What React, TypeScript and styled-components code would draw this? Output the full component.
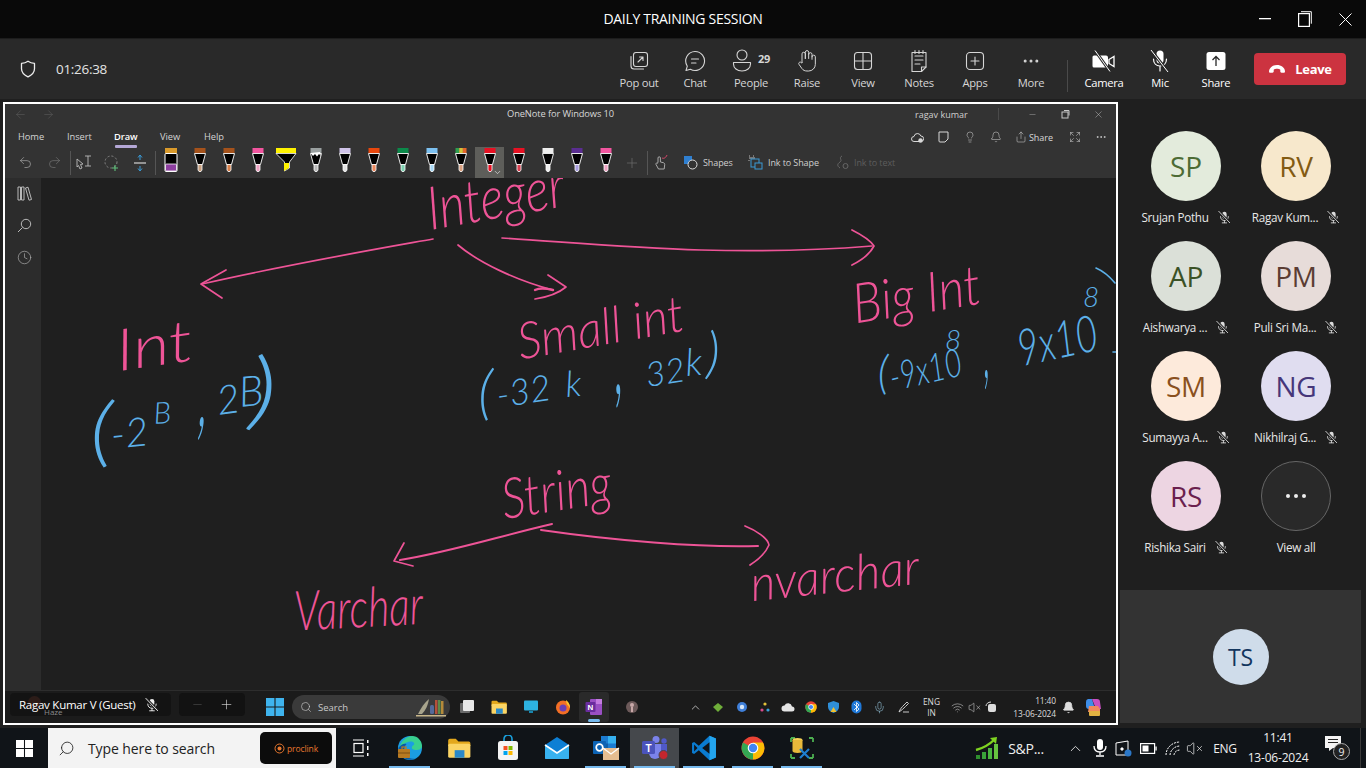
import React from "react";
import styled, { createGlobalStyle } from "styled-components";
import {
  ArrowLeft, ArrowRight, Bell, ChevronDown, ChevronUp, Clock, Expand, Lightbulb, Minus, MoreHorizontal,
  Plus, Redo2, Search, Undo2, X, Mic, Wifi, VolumeX, Share,
} from "lucide-react";

const UI = `"Open Sans", "Noto Sans", "Liberation Sans", sans-serif`;

const Global = createGlobalStyle`
  html, body { margin: 0; padding: 0; background: #1f1f1f; overflow: hidden; }
  * { box-sizing: border-box; }
  #root { width: 1366px; height: 768px; }
`;

const Root = styled.div`
  width: 1366px; height: 768px; display: flex; flex-direction: column;
  background: #1f1f1f; font-family: ${UI}; color: #fff; overflow: hidden;
`;

/* ---------- Teams title bar ---------- */
const TitleBar = styled.header`
  height: 39px; flex: none; position: relative; display: flex; align-items: center; justify-content: center;
  background: #090909; border-bottom: 1px solid #1d1d1d; padding-bottom: 2px;
`;
const Title = styled.div`font-size: 14px; letter-spacing: -0.3px; color: #fff;`;
const WindowButtons = styled.div`
  position: absolute; right: 1px; top: 3px; display: flex; align-items: center;
`;
const WindowButton = styled.div`
  width: 40px; height: 32px; display: flex; align-items: center; justify-content: center;
`;

/* ---------- Teams meeting toolbar ---------- */
const Toolbar = styled.div`
  height: 60px; flex: none; display: flex; align-items: center; background: #292929; padding: 0 20px 0 20px;
`;
const Timer = styled.div`
  margin-left: 20px; font-size: 13.5px; letter-spacing: -0.3px; color: #e4e4e4;
`;
const ToolGroup = styled.div`display: flex; margin-left: auto;`;
const ToolItem = styled.div<{ $bright?: boolean }>`
  width: 56px; height: 60px; display: flex; flex-direction: column; align-items: center; justify-content: flex-start;
  padding-top: 9px; position: relative;
  color: ${(p) => (p.$bright ? "#fff" : "#d6d6d6")};
`;
const ToolIcon = styled.div`height: 25px; display: flex; align-items: center; justify-content: center;`;
const ToolLabel = styled.div<{ $bright?: boolean }>`
  margin-top: 3px; font-size: 11.2px; letter-spacing: -0.25px; line-height: 14px; font-weight: ${(p) => (p.$bright ? 500 : 400)};
`;
const Count = styled.span`
  position: absolute; left: 35px; top: 12px; font-size: 11px; font-weight: 700; letter-spacing: -0.2px;
`;
const ToolDivider = styled.div`width: 1px; height: 32px; background: #4a4a4a; margin: 14px 8px 0 8px;`;
const LeaveButton = styled.div`
  width: 92px; height: 32px; margin-left: 10px; border-radius: 4px; align-self: center;
  background: #cc3340; display: flex; align-items: center; justify-content: center; gap: 9px;
  font-size: 13px; font-weight: 700; letter-spacing: -0.3px;
`;

/* ---------- Stage ---------- */
const Stage = styled.main`
  flex: 1; min-height: 0; display: flex; padding: 3px 0 3px 3px; background: #1f1f1f;
`;
const SharedScreen = styled.section`
  width: 1115px; height: 623px; flex: none; border: 2px solid #fff; display: flex; flex-direction: column;
  background: #1f1f1f; overflow: hidden;
`;

/* ---------- OneNote chrome ---------- */
const Chrome = styled.div`height: 74px; flex: none; background: #333333; display: flex; flex-direction: column;`;
const ChromeTitleRow = styled.div`
  height: 21px; display: flex; align-items: center; position: relative; padding-left: 9px; gap: 15px; color: #5f5f5f;
`;
const AppName = styled.div`
  position: absolute; left: 502px; top: 3px; font-size: 9.3px; letter-spacing: -0.1px; color: #d8d8d8; line-height: 14px;
`;
const UserName = styled.div`
  position: absolute; left: 910px; top: 4px; font-size: 9px; color: #d0d0d0; line-height: 14px;
`;
const UserRule = styled.div`position: absolute; left: 993px; top: 4px; width: 1px; height: 12px; background: #4a4a4a;`;
const MiniWindowButtons = styled.div`
  position: absolute; left: 1011px; top: 3px; display: flex; color: #c8c8c8; align-items: center;
`;
const MiniButton = styled.div`width: 33px; height: 14px; display: flex; align-items: center; justify-content: center;`;
const ChromeTabRow = styled.div`height: 22px; display: flex; align-items: center; padding: 1px 0 0 13px; position: relative;`;
const Tab = styled.div<{ $active?: boolean; $w: number }>`
  width: ${(p) => p.$w}px; font-size: 9.3px; letter-spacing: -0.05px; color: ${(p) => (p.$active ? "#fff" : "#d4d4d4")};
  font-weight: ${(p) => (p.$active ? 600 : 400)}; position: relative; line-height: 14px;
  ${(p) => p.$active && `&::after { content: ""; position: absolute; left: 1px; top: 15px; width: 22px; height: 3px; background: #b4a7d6; border-radius: 1px; }`}
`;
const RibbonActions = styled.div`
  position: absolute; left: 899.5px; top: 3px; display: flex; align-items: center; color: #d8d8d8; height: 18px;
`;
const RibbonAction = styled.div<{ $w: number }>`
  width: ${(p) => p.$w}px; display: flex; align-items: center; gap: 2px; justify-content: center;
  font-size: 9px; color: #d8d8d8;
`;
const ChromeToolRow = styled.div`flex: 1; display: flex; align-items: center; padding-left: 10px;`;
const RibbonIcon = styled.div<{ $w: number; $ml?: number }>`
  width: ${(p) => p.$w}px; margin-left: ${(p) => p.$ml ?? 0}px; height: 31px; display: flex; align-items: center; justify-content: center; flex: none;
`;
const RibbonRule = styled.div<{ $ml?: number }>`width: 1px; height: 24px; background: #555; flex: none; margin-left: ${(p) => p.$ml ?? 0}px;`;
const PenSlot = styled.div<{ $selected?: boolean }>`
  width: 29px; height: 31px; flex: none; display: flex; align-items: flex-start; justify-content: center; padding-top: 1px;
  position: relative; background: ${(p) => (p.$selected ? "#5e5e5a" : "transparent")};
`;
const PenChevron = styled.div`position: absolute; right: 2px; bottom: 1px; display: flex; color: #fff;`;
const RibbonText = styled.div<{ $dim?: boolean; $w: number; $ml?: number }>`
  width: ${(p) => p.$w}px; margin-left: ${(p) => p.$ml ?? 0}px; flex: none; font-size: 9px; letter-spacing: -0.1px; color: ${(p) => (p.$dim ? "#5d5d5d" : "#cfcfcf")};
`;

/* ---------- OneNote body ---------- */
const NoteBody = styled.div`flex: 1; min-height: 0; display: flex;`;
const NoteSide = styled.nav`
  width: 36px; flex: none; background: #2c2c2c; display: flex; flex-direction: column; align-items: center;
  padding-top: 8px; padding-left: 2px; gap: 17px; color: #b9b9b9;
`;
const NoteCanvas = styled.div`flex: 1; position: relative; overflow: hidden; background: #1f1f1f;`;
const InkLayer = styled.svg`position: absolute; left: 0; top: 0;`;
const Ink = styled.span<{ $x: number; $b: number; $s: number; $r?: number; $blue?: boolean; $sx?: number; $sy?: number }>`
  position: absolute; white-space: pre; line-height: 1;
  font-family: "Lato", "Open Sans", sans-serif; font-style: italic; font-weight: 300;
  left: ${(p) => p.$x - 41}px; top: ${(p) => p.$b - 178 - p.$s * 0.8}px; font-size: ${(p) => p.$s}px;
  color: ${(p) => (p.$blue ? "#5cb0e8" : "#ee5497")};
  transform-origin: 0 80%;
  transform: rotate(${(p) => p.$r ?? 0}deg) scale(${(p) => p.$sx ?? 1}, ${(p) => p.$sy ?? 1});
`;

/* ---------- Remote taskbar ---------- */
const RemoteBar = styled.div`
  height: 33px; flex: none; background: #1b1b1b; border-top: 1px solid #2d2d2d; display: flex; align-items: center; position: relative;
`;
const WeatherBlob = styled.div`
  position: absolute; left: 23px; top: 5px; width: 13px; height: 13px; border-radius: 50%; background: #8a4030; z-index: 1;
`;
const NamePill = styled.div`
  position: absolute; left: 5px; top: 2px; width: 161px; height: 23px; background: #121212c8; border-radius: 4px;
  display: flex; align-items: center; padding-left: 9px; gap: 8px; z-index: 2;
  font-size: 11.5px; letter-spacing: -0.25px; color: #fff; font-weight: 500;
`;
const HazeText = styled.div`
  position: absolute; left: 39px; top: 16px; font-size: 8px; color: #8c8c8c; z-index: 3; line-height: 10px;
`;
const ZoomPill = styled.div`
  position: absolute; left: 174px; top: 2px; width: 66px; height: 23px; background: #121212; border-radius: 4px;
  display: flex; align-items: center; justify-content: space-around; padding: 0 4px; color: #e0e0e0;
`;
const RemoteApps = styled.div`margin-left: 255px; display: flex; align-items: center; height: 100%;`;
const RemoteSlot = styled.div<{ $w: number; $active?: boolean }>`
  width: ${(p) => p.$w}px; height: 30px; flex: none; display: flex; align-items: center; justify-content: center; position: relative;
  ${(p) => p.$active && `background: #2a2a2a; border-radius: 3px; &::after { content: ""; position: absolute; bottom: 0; left: 9px; width: 12px; height: 3px; border-radius: 2px; background: #76b9ed; }`}
`;
const RemoteSearch = styled.div`
  width: 158px; height: 24px; flex: none; margin: 0 1px 0 3px; background: #3a3a3a; border-radius: 12px; display: flex; align-items: center;
  padding: 0 3px 0 8px; gap: 6px; font-size: 9.5px; color: #c9c9c9;
`;
const SearchWord = styled.span`flex: 1;`;
const RemoteTray = styled.div`margin-left: auto; display: flex; align-items: center; height: 100%; padding-right: 10px;`;
const RemoteTrayIcon = styled.div<{ $w?: number }>`
  width: ${(p) => p.$w ?? 23}px; flex: none; display: flex; justify-content: center; align-items: center; color: #ddd;
`;
const RemoteLang = styled.div`
  width: 33px; text-align: center; font-size: 8.4px; line-height: 11px; color: #ddd; flex: none;
`;
const RemoteClock = styled.div`
  width: 52px; margin-left: 3px; text-align: right; font-size: 8.4px; line-height: 13px; color: #ddd; flex: none; letter-spacing: -0.1px;
`;

/* ---------- Participants ---------- */
const Side = styled.aside`
  flex: 1; min-width: 0; display: flex; flex-direction: column; padding-left: 2px;
`;
const PeopleGrid = styled.div`
  height: 488px; flex: none; padding: 29px 0 0 11px; display: grid; grid-template-columns: 110px 110px; grid-auto-rows: 110px;
`;
const Person = styled.div`display: flex; flex-direction: column; align-items: center;`;
const Avatar = styled.div<{ $bg: string; $fg: string; $d?: number; $fs?: number }>`
  width: ${(p) => p.$d ?? 70}px; height: ${(p) => p.$d ?? 70}px; border-radius: 50%; flex: none;
  background: ${(p) => p.$bg}; color: ${(p) => p.$fg}; font-size: ${(p) => p.$fs ?? 28}px;
  display: flex; align-items: center; justify-content: center; letter-spacing: -0.2px;
`;
const MoreCircle = styled.div`
  width: 70px; height: 70px; border-radius: 50%; flex: none; border: 1px solid #666; background: #292929;
  display: flex; align-items: center; justify-content: center; gap: 4px;
`;
const Dot = styled.i`width: 4px; height: 4px; border-radius: 50%; background: #eee; display: block;`;
const NameRow = styled.div`
  margin-top: 8px; height: 16px; display: flex; align-items: center; gap: 8px; font-size: 11.7px; letter-spacing: -0.28px; color: #e8e8e8;
`;
const SelfTile = styled.div`
  width: 241px; height: 133px; flex: none; background: #333333; display: flex; align-items: center; justify-content: center;
`;

/* ---------- Windows taskbar ---------- */
const Taskbar = styled.footer`
  height: 40px; flex: none; display: flex; align-items: center; background: #101418; position: relative;
`;
const StartSlot = styled.div`width: 48px; flex: none; height: 100%; display: flex; align-items: center; justify-content: center;`;
const SearchBox = styled.div`
  width: 288px; height: 100%; flex: none; background: #f3f3f3; display: flex; align-items: center; padding: 0 4px 0 10px; color: #222;
  font-size: 14px; letter-spacing: -0.1px;
`;
const FlippedSearch = styled(Search)`transform: scaleX(-1); flex: none;`;
const SearchLabel = styled.span`margin-left: 13px; flex: 1;`;
const BrandButton = styled.div`
  width: 72px; height: 32px; background: #0c0c0c; border-radius: 5px; display: flex; align-items: center; justify-content: center; gap: 2px;
  color: #e8772e; font-size: 8.5px;
`;
const TaskSlot = styled.div<{ $open?: boolean; $active?: boolean }>`
  width: 49px; height: 100%; flex: none; display: flex; align-items: center; justify-content: center; position: relative;
  background: ${(p) => (p.$active ? "#45484c" : "transparent")};
  ${(p) => p.$open && `&::after { content: ""; position: absolute; left: 4px; right: 4px; bottom: 0; height: 2px; background: #76b9ed; }`}
`;
const Tray = styled.div`margin-left: auto; height: 100%; display: flex; align-items: center; color: #f0f0f0; padding-right: 5px;`;
const TrayIcon = styled.div<{ $w: number; $ml?: number }>`
  width: ${(p) => p.$w}px; margin-left: ${(p) => p.$ml ?? 0}px; flex: none; display: flex; align-items: center; justify-content: center;
`;
const TrayText = styled.div<{ $w: number; $ml?: number; $fs?: number }>`
  width: ${(p) => p.$w}px; margin-left: ${(p) => p.$ml ?? 0}px; flex: none; font-size: ${(p) => p.$fs ?? 12}px; letter-spacing: -0.3px; text-align: center; color: #f0f0f0;
`;
const Clock2 = styled.div`
  width: 72px; flex: none; text-align: center; font-size: 12px; line-height: 20px; letter-spacing: -0.2px; color: #f0f0f0;
`;
const Notify = styled.div`width: 47px; height: 100%; flex: none; position: relative; border-right: 1px solid #3a3a3a;`;
const NotifyBubble = styled.svg`position: absolute; left: 10px; top: 7px;`;
const NotifyBadge = styled.div`
  position: absolute; left: 19px; top: 15px; width: 17px; height: 17px; border-radius: 50%; background: #222; border: 1px solid #aaa;
  font-size: 10.5px; display: flex; align-items: center; justify-content: center; color: #f0f0f0;
`;

/* ---------- Drawn icons ---------- */
const line = { fill: "none", stroke: "currentColor", strokeLinecap: "round", strokeLinejoin: "round" } as const;

const MicSvg = styled.svg<{ $c: string }>`color: ${(p) => p.$c}; flex: none;`;
const MicSlash = ({ s = 14, c = "#dcdcdc" }: { s?: number; c?: string }) => (
  <MicSvg $c={c} width={s} height={s} viewBox="0 0 16 16">
    <rect x="6" y="2" width="5" height="8" rx="2.5" fill="currentColor" />
    <path d="M4 7.5c0 3 2 4.5 4.5 4.5S13 10.5 13 7.5M8.5 12v2.5M6 14.7h5" {...line} strokeWidth="1" />
    <path d="M2 1.5l12.5 13" stroke="#1f1f1f" strokeWidth="3" />
    <path d="M2 1.5l12.5 13" {...line} strokeWidth="1" />
  </MicSvg>
);
const ShieldIcon = () => (
  <svg width="16" height="18" viewBox="0 0 16 18">
    <path d="M8 1.2c2 1.4 4 2 6.5 2.2v5.4c0 3.6-2.6 6.2-6.5 8-3.9-1.8-6.5-4.4-6.5-8V3.4C4 3.2 6 2.600 8 1.200z" {...line} strokeWidth="1.3" color="#eee" />
  </svg>
);
const PopOutIcon = () => (
  <svg width="20" height="20" viewBox="0 0 20 20">
    <path d="M2 5.500v9.500a3 3 0 0 0 3 3h9.500" {...line} strokeWidth="1.1" />
    <rect x="4.500" y="1.500" width="14" height="14" rx="2.500" {...line} strokeWidth="1.1" />
    <path d="M9 11l5-5M10.500 6H14v3.500" {...line} strokeWidth="1.1" />
  </svg>
);
const ChatIcon = () => (
  <svg width="22" height="22" viewBox="0 0 22 22">
    <path d="M11 1.500a9.500 9.500 0 1 1-4.600 17.800L2 20.500l1.300-4.300A9.500 9.500 0 0 1 11 1.500z" {...line} strokeWidth="1.1" />
    <path d="M7.500 9h7M7.500 13h4.500" {...line} strokeWidth="1.1" />
  </svg>
);
const PeopleSvg = styled.svg`margin-left: -18px;`;
const PeopleIcon = () => (
  <PeopleSvg width="22" height="24" viewBox="0 0 22 24">
    <circle cx="11" cy="6" r="5" {...line} strokeWidth="1.1" />
    <path d="M2.500 13.500h17V15c0 4-3.500 7-8.500 7s-8.500-3-8.500-7z" {...line} strokeWidth="1.1" />
  </PeopleSvg>
);
const HandIcon = () => (
  <svg width="20" height="24" viewBox="0 0 24 28">
    <path d="M18 12V6a2 2 0 0 0-4 0M14 11V3.500a2 2 0 0 0-4 0V11M10 11V5.500a2 2 0 0 0-4 0V16M18 9a2 2 0 0 1 4 0v9a8 8 0 0 1-8 8h-2c-2.800 0-4.500-.900-6-2.800l-3.500-5c-1.500-2.200 1.500-4 3-2L6 16" {...line} strokeWidth="1.2" />
  </svg>
);
const GridIcon = () => (
  <svg width="20" height="20" viewBox="0 0 20 20">
    <rect x="1.500" y="1.500" width="17" height="17" rx="3" {...line} strokeWidth="1.1" />
    <path d="M10 1.500v17M1.500 10h17" {...line} strokeWidth="1.1" />
  </svg>
);
const NotesIcon = () => (
  <svg width="18" height="24" viewBox="0 0 18 24">
    <path d="M2 3.500h14v14.500l-4.500 4.500H2z" {...line} strokeWidth="1.1" />
    <path d="M11.500 22.500V18H16M5 7h8M5 11h8M5 15h5M5 1.500v3M9 1.500v3M13 1.500v3" {...line} strokeWidth="1.1" />
  </svg>
);
const AppsIcon = () => (
  <svg width="20" height="20" viewBox="0 0 20 20">
    <rect x="1.500" y="1.500" width="17" height="17" rx="3.500" {...line} strokeWidth="1.1" />
    <path d="M10 6v8M6 10h8" {...line} strokeWidth="1.1" />
  </svg>
);
const CameraOff = () => (
  <svg width="24" height="24" viewBox="0 0 24 24">
    <path d="M2 6.500h12a2 2 0 0 1 2 2v8a2 2 0 0 1-2 2H2a1.500 1.500 0 0 1-1.500-1.500V8A1.500 1.500 0 0 1 2 6.500z" fill="#fff" />
    <path d="M17 10.500l5-3v10l-5-3z" fill="none" stroke="#fff" strokeWidth="1.300" />
    <path d="M3 1.500l15 21" stroke="#292929" strokeWidth="3" />
    <path d="M3 1.500l15 21" stroke="#fff" strokeWidth="1" />
  </svg>
);
const BigMicOff = () => (
  <svg width="24" height="24" viewBox="0 0 24 24">
    <rect x="8.500" y="1.500" width="7" height="13" rx="3.500" fill="#fff" />
    <path d="M5.500 10c0 4.500 2.800 7 6.500 7s6.500-2.500 6.500-7M12 17v5" {...line} stroke="#fff" strokeWidth="1.200" />
    <path d="M3 1l17 22" stroke="#292929" strokeWidth="3" />
    <path d="M3 1l17 22" stroke="#fff" strokeWidth="1" />
  </svg>
);
const ShareIcon = () => (
  <svg width="20" height="20" viewBox="0 0 20 20">
    <rect x="0.500" y="1" width="19" height="18" rx="2.500" fill="#fff" />
    <path d="M10 15V6M6.500 9L10 5.500 13.500 9" fill="none" stroke="#292929" strokeWidth="1.300" />
  </svg>
);
const HangUp = () => (
  <svg width="18" height="10" viewBox="0 0 18 10">
    <path d="M1 7.500C1 3.500 5 1 9 1s8 2.500 8 6.500c0 .800-.600 1.300-1.200 1.300h-2.300c-.7 0-1.200-.500-1.200-1.200V5.700C11.500 5 10.300 4.800 9 4.800s-2.500.200-3.300.900v1.900c0 .700-.500 1.200-1.200 1.200H2.200C1.600 8.800 1 8.300 1 7.500z" fill="#fff" />
  </svg>
);

const WideSvg = styled.svg`margin-left: -2px;`;
const Pen = ({ top, tip, kind = "pen" }: { top: string; tip: string; kind?: string }) => {
  if (kind === "marker")
    return (
      <svg width="14" height="24" viewBox="0 0 14 24">
        <rect x="1" y="0" width="12" height="5.500" fill={top} />
        <rect x="1" y="5.500" width="12" height="18" rx="1" fill="#000" stroke="#fff" strokeWidth="1" />
        <rect x="1.500" y="16" width="11" height="7" rx="1" fill={tip} stroke="#fff" strokeWidth=".8" />
      </svg>
    );
  if (kind === "high")
    return (
      <WideSvg width="22" height="24" viewBox="0 0 22 24">
        <rect x="1" y="0" width="20" height="5" fill={top} />
        <path d="M1 5.500h20l-6.500 8.500V20l-5 3v-9z" fill="#000" stroke="#fff" strokeWidth=".8" />
        <path d="M9 15h5v5l-5 3z" fill={top} />
      </WideSvg>
    );
  return (
    <svg width="14" height="24" viewBox="0 0 14 24">
      {kind === "rainbow" ? (
        <>
          <rect x="1.500" y="0" width="3.700" height="5" fill="#2f9e4f" />
          <rect x="5.200" y="0" width="3.700" height="5" fill="#d6c23a" />
          <rect x="8.900" y="0" width="3.600" height="5" fill="#e2662a" />
        </>
      ) : (
        <rect x="1.500" y="0" width="11" height="5" fill={top} />
      )}
      <path d="M1.500 5.500h11L9.500 16.500h-5z" fill="#000" stroke="#fff" strokeWidth=".9" />
      <path d="M5 16.500h4V22l-1 1.500H6L5 22z" fill={tip} stroke="#fff" strokeWidth=".8" />
      {kind === "galaxy" && <path d="M1.500 5l2.500 3 2-2 2 2.500 2-2.500 2 2-1-4z" fill="#fff" />}
    </svg>
  );
};

const pens = [
  { top: "#d99a2b", tip: "#8e3fa0", kind: "marker" },
  { top: "#a5521b", tip: "#c8a080" },
  { top: "#a5521b", tip: "#d8804a" },
  { top: "#f2559f", tip: "#eea4c4" },
  { top: "#fff200", tip: "#fff200", kind: "high" },
  { top: "#9aa0a0", tip: "#bbbbbb", kind: "galaxy" },
  { top: "#cfc3e8", tip: "#e5e5e5" },
  { top: "#e8470d", tip: "#ec8a60" },
  { top: "#0b8a4a", tip: "#7ed0b0" },
  { top: "#7cc0f0", tip: "#a8d8f5" },
  { top: "#888", tip: "#d8a080", kind: "rainbow" },
  { top: "#e81123", tip: "#e81123", sel: true },
  { top: "#e81123", tip: "#d84050" },
  { top: "#eeeeee", tip: "#eeeeee" },
  { top: "#5a2d91", tip: "#a99fdf" },
  { top: "#f2559f", tip: "#eea4c4" },
];

/* taskbar app icons */
const WinLogo = ({ s, c }: { s: number; c: string }) => (
  <svg width={s} height={s} viewBox="0 0 16 16">
    <path d="M0 0h7.500v7.500H0zM8.500 0H16v7.500H8.500zM0 8.500h7.500V16H0zM8.500 8.500H16V16H8.500z" fill={c} />
  </svg>
);
const Win11Logo = () => (
  <svg width="18" height="18" viewBox="0 0 16 16">
    <path d="M0 0h7.500v7.500H0zM8.500 0H16v7.500H8.500zM0 8.500h7.500V16H0zM8.500 8.500H16V16H8.500z" fill="#3fb4ee" />
  </svg>
);
const Folder = ({ s }: { s: number }) => (
  <svg width={s} height={s} viewBox="0 0 24 24">
    <path d="M2 5a1.500 1.500 0 0 1 1.500-1.500H9l2.500 2.500H21a1.500 1.500 0 0 1 1.500 1.500V10H2z" fill="#e3a81d" />
    <rect x="2" y="8" width="20.500" height="13" rx="1.500" fill="#fbd565" />
    <rect x="8" y="14" width="9" height="7" fill="#2b89c8" />
  </svg>
);
const Edge = () => (
  <svg width="26" height="26" viewBox="0 0 26 26">
    <circle cx="13" cy="13" r="12" fill="#1b9de2" />
    <path d="M2 15C3 6 10 1 15 1c6 0 10 5 10 10 0 3-3 4-6 4-2 0-5-1-4-3 .6-2 3-2 2-4-2-3-8-1-11 2-2 2-3 4-4 5z" fill="#38cf8f" />
    <path d="M1.500 13c2-3 5-5 8-4-3 3-3 9 0 12 2 2 6 4 10 2-3 2-7 2-10 1-4-1-8-5-8-11z" fill="#0c59a4" />
    <rect x="1" y="14" width="12" height="9" rx="1" fill="#b87a22" />
    <rect x="5" y="12" width="4" height="2.500" fill="none" stroke="#b87a22" strokeWidth="1.200" />
    <rect x="1" y="17.500" width="12" height="1" fill="#7d4f12" />
  </svg>
);
const Store = () => (
  <svg width="24" height="26" viewBox="0 0 24 26">
    <path d="M8 7V4a4 4 0 0 1 8 0v3" fill="none" stroke="#19a0dc" strokeWidth="1.600" />
    <rect x="2" y="6" width="20" height="19" rx="2.500" fill="#f4f4f4" />
    <rect x="7.500" y="11" width="4" height="4" fill="#f25022" />
    <rect x="12.500" y="11" width="4" height="4" fill="#7fba00" />
    <rect x="7.500" y="16" width="4" height="4" fill="#00a4ef" />
    <rect x="12.500" y="16" width="4" height="4" fill="#ffb900" />
  </svg>
);
const Mail = () => (
  <svg width="26" height="24" viewBox="0 0 26 24">
    <path d="M1 9l12-8 12 8v13a1 1 0 0 1-1 1H2a1 1 0 0 1-1-1z" fill="#0d7fd4" />
    <path d="M1 9l12 8 12-8v13a1 1 0 0 1-1 1H2a1 1 0 0 1-1-1z" fill="#38b2f0" />
    <path d="M1 9l12 8 12-8" fill="none" stroke="#fff" strokeWidth="1.600" />
  </svg>
);
const Outlook = () => (
  <svg width="28" height="26" viewBox="0 0 28 26">
    <rect x="9" y="1" width="15" height="15" fill="#1b7bd0" />
    <rect x="16" y="1" width="8" height="7.500" fill="#35b0ee" />
    <rect x="9" y="8.500" width="7" height="7.500" fill="#0f5fa8" />
    <rect x="1" y="6" width="13" height="13" rx="1" fill="#0c63b4" />
    <circle cx="7.500" cy="12.500" r="3.300" fill="none" stroke="#fff" strokeWidth="1.700" />
    <rect x="11" y="13" width="16" height="12" fill="#e6bd90" />
    <path d="M11 13l8 6 8-6" fill="none" stroke="#fff" strokeWidth="1.200" />
  </svg>
);
const Teams = () => (
  <svg width="28" height="26" viewBox="0 0 28 26">
    <circle cx="15" cy="4.500" r="3.500" fill="#7b83eb" />
    <circle cx="23" cy="6" r="2.700" fill="#5059c9" />
    <path d="M17 9h9v8a4 4 0 0 1-8 0z" fill="#5059c9" />
    <path d="M8 9h12v9a6 6 0 0 1-12 0z" fill="#7b83eb" />
    <rect x="1" y="6" width="13" height="13" rx="1.500" fill="#4b53bc" />
    <text x="7.500" y="16.500" textAnchor="middle" fill="#fff" fontSize="10" fontWeight="700" fontFamily="Liberation Sans, sans-serif">T</text>
    <circle cx="22.500" cy="20" r="4.500" fill="#c4262e" stroke="#45484c" />
  </svg>
);
const VSCode = () => (
  <svg width="26" height="26" viewBox="0 0 100 100">
    <path d="M71 3L30 41 12 27 4 31v38l8 4 18-14 41 38 25-10V13z" fill="#0a7bd0" />
    <path d="M12 37l13 13-13 13z" fill="#101418" />
    <path d="M71 3l25 10v74L71 97z" fill="#23a5ee" />
    <path d="M71 28L43 50l28 22z" fill="#101418" />
  </svg>
);
const ChromeLogo = ({ s = 24 }: { s?: number }) => (
  <svg width={s} height={s} viewBox="0 0 24 24">
    <circle cx="12" cy="12" r="11.500" fill="#ea4335" />
    <path d="M12 12L2 6.500A11.500 11.500 0 0 0 12 23.500z" fill="#34a853" />
    <path d="M12 12v11.500A11.500 11.500 0 0 0 22 6.500H12z" fill="#fbbc05" />
    <circle cx="12" cy="12" r="5.300" fill="#fff" />
    <circle cx="12" cy="12" r="4.200" fill="#4285f4" />
  </svg>
);
const ToolApp = () => (
  <svg width="26" height="26" viewBox="0 0 26 26">
    <path d="M2 3h4M2 3v4M24 3h-4M24 3v4M2 23h4M2 23v-4M24 23h-4M24 23v-4" stroke="#4caf50" strokeWidth="1.800" fill="none" />
    <ellipse cx="8.500" cy="5" rx="5" ry="2" fill="#f6d155" />
    <path d="M3.500 5v11c0 1.200 2.300 2 5 2s5-.800 5-2V5z" fill="#e8b93a" />
    <path d="M11 14l9 9M20 14l-9 9" stroke="#1f7fd0" strokeWidth="2.200" />
  </svg>
);
const SPChart = () => (
  <svg width="26" height="24" viewBox="0 0 26 24">
    <rect x="1" y="19" width="4" height="4" fill="#2f8f2f" />
    <rect x="7" y="16" width="4" height="7" fill="#3aa23a" />
    <rect x="13" y="12" width="4" height="11" fill="#4ab53f" />
    <rect x="19" y="8" width="4" height="15" fill="#66c43f" />
    <path d="M1 14C9 12 15 8 20 3" stroke="#7ed321" strokeWidth="2.400" fill="none" />
    <path d="M15 2l7-1-1 7z" fill="#7ed321" />
  </svg>
);
const Stack = () => (
  <svg width="16" height="16" viewBox="0 0 16 16">
    <rect x="1" y="4" width="10" height="10" rx="1" fill="#6a6a6a" />
    <rect x="4" y="1" width="11" height="11" rx="1" fill="#e8e8e8" />
  </svg>
);
const Monitor = () => (
  <svg width="16" height="16" viewBox="0 0 16 16">
    <rect x="1" y="1.500" width="14" height="10" rx="1" fill="#2db2e0" />
    <rect x="6" y="12" width="4" height="2" fill="#1986ae" />
  </svg>
);
const Firefox = () => (
  <svg width="16" height="16" viewBox="0 0 16 16">
    <circle cx="8" cy="8.500" r="7" fill="#f36f26" />
    <path d="M11 1c3 2 4 5 4 8-2-3-4-4-4-8z" fill="#ffc72e" />
    <circle cx="8" cy="9" r="3.500" fill="#6b3fb5" />
  </svg>
);
const OneNoteLogo = () => (
  <svg width="18" height="18" viewBox="0 0 18 18">
    <rect x="5" y="1" width="12" height="16" rx="1" fill="#9a4fc4" />
    <rect x="11" y="1" width="6" height="5" fill="#c37be0" />
    <rect x="0.500" y="4" width="10" height="10" rx="1" fill="#6a2c9e" />
    <text x="5.500" y="12" textAnchor="middle" fill="#fff" fontSize="8" fontWeight="700" fontFamily="Liberation Sans, sans-serif">N</text>
  </svg>
);
const ProfileBlob = () => (
  <svg width="14" height="14" viewBox="0 0 14 14">
    <circle cx="7" cy="7" r="6" fill="#6d5a5a" />
    <circle cx="7" cy="5" r="2" fill="#c8a8a8" />
    <rect x="6" y="7" width="2" height="5" fill="#c8a8a8" />
  </svg>
);
const Dotty = ({ c }: { c: string }) => <svg width="12" height="12" viewBox="0 0 12 12"><circle cx="6" cy="6" r="5" fill={c} /><circle cx="6" cy="6" r="2.200" fill="#d8e8f8" /></svg>;
const Copilot = () => (
  <svg width="20" height="20" viewBox="0 0 20 20">
    <path d="M5 2h4l3 10H6a3 3 0 0 1-3-3V5a3 3 0 0 1 2-3z" fill="#3e8ee8" />
    <path d="M9 2h5a3 3 0 0 1 3 3l1 7h-5z" fill="#c850c0" />
    <path d="M6 9h9l2 3v3H5z" fill="#f08a5d" />
    <rect x="6" y="14" width="11" height="5" rx="1" fill="#e3b341" />
  </svg>
);
const BookArt = () => (
  <svg width="32" height="20" viewBox="0 0 32 20">
    <path d="M1 18h30v1.500H1z" fill="#c8b78a" />
    <path d="M3 17C6 11 9 6 14 2c-1 6-3 11-7 15z" fill="#a8a48c" />
    <rect x="15" y="8" width="4" height="9" rx="1.500" fill="#546a9a" />
    <rect x="20" y="3" width="2.500" height="14" fill="#b5503a" />
    <rect x="23" y="3" width="2.500" height="14" fill="#5c8a4a" />
    <rect x="26" y="4" width="2.500" height="13" fill="#b58a3a" />
  </svg>
);

const people = [
  { i: "SP", n: "Srujan Pothu", bg: "#e3ebdc", fg: "#4d6b35" },
  { i: "RV", n: "Ragav Kum...", bg: "#f7e8cc", fg: "#835b12" },
  { i: "AP", n: "Aishwarya ...", bg: "#dbe0d8", fg: "#3b5226" },
  { i: "PM", n: "Puli Sri Ma...", bg: "#e7dcd9", fg: "#5b3d33" },
  { i: "SM", n: "Sumayya A...", bg: "#fdeadb", fg: "#8a5020" },
  { i: "NG", n: "Nikhilraj G...", bg: "#e0ddf0", fg: "#46367a" },
  { i: "RS", n: "Rishika Sairi", bg: "#edd5e2", fg: "#6b1f4e" },
];

const PINK = "#ee5497";

export default function App() {
  return (
    <Root>
      <Global />
      <TitleBar>
        <Title>DAILY TRAINING SESSION</Title>
        <WindowButtons>
          <WindowButton>
            <svg width="12" height="2"><rect width="12" height="1.300" fill="#fff" /></svg>
          </WindowButton>
          <WindowButton>
            <svg width="14" height="16" viewBox="0 0 14 16"><rect x=".6" y="2.600" width="10.800" height="12.800" fill="none" stroke="#fff" strokeWidth="1.200" /><path d="M3 .7h10.300v12" fill="none" stroke="#fff" /></svg>
          </WindowButton>
          <WindowButton>
            <svg width="13" height="13" viewBox="0 0 13 13"><path d="M.5.500l12 12M12.500.500l-12 12" stroke="#fff" strokeWidth="1" /></svg>
          </WindowButton>
        </WindowButtons>
      </TitleBar>

      <Toolbar>
        <ShieldIcon />
        <Timer>01:26:38</Timer>
        <ToolGroup>
          <ToolItem><ToolIcon><PopOutIcon /></ToolIcon><ToolLabel>Pop out</ToolLabel></ToolItem>
          <ToolItem><ToolIcon><ChatIcon /></ToolIcon><ToolLabel>Chat</ToolLabel></ToolItem>
          <ToolItem><ToolIcon><PeopleIcon /></ToolIcon><Count>29</Count><ToolLabel>People</ToolLabel></ToolItem>
          <ToolItem><ToolIcon><HandIcon /></ToolIcon><ToolLabel>Raise</ToolLabel></ToolItem>
          <ToolItem><ToolIcon><GridIcon /></ToolIcon><ToolLabel>View</ToolLabel></ToolItem>
          <ToolItem><ToolIcon><NotesIcon /></ToolIcon><ToolLabel>Notes</ToolLabel></ToolItem>
          <ToolItem><ToolIcon><AppsIcon /></ToolIcon><ToolLabel>Apps</ToolLabel></ToolItem>
          <ToolItem><ToolIcon><MoreHorizontal size={20} strokeWidth={1.6} /></ToolIcon><ToolLabel>More</ToolLabel></ToolItem>
        </ToolGroup>
        <ToolDivider />
        <ToolItem $bright><ToolIcon><CameraOff /></ToolIcon><ToolLabel $bright>Camera</ToolLabel></ToolItem>
        <ToolItem $bright><ToolIcon><BigMicOff /></ToolIcon><ToolLabel $bright>Mic</ToolLabel></ToolItem>
        <ToolItem $bright><ToolIcon><ShareIcon /></ToolIcon><ToolLabel $bright>Share</ToolLabel></ToolItem>
        <LeaveButton><HangUp />Leave</LeaveButton>
      </Toolbar>

      <Stage>
        <SharedScreen>
          <Chrome>
            <ChromeTitleRow>
              <ArrowLeft size={13} strokeWidth={1} />
              <ArrowRight size={13} strokeWidth={1} />
              <AppName>OneNote for Windows 10</AppName>
              <UserName>ragav kumar</UserName>
              <UserRule />
              <MiniWindowButtons>
                <MiniButton><Minus size={9} strokeWidth={1} /></MiniButton>
                <MiniButton><svg width="9" height="9" viewBox="0 0 9 9"><rect x="1" y="2" width="6" height="6" fill="none" stroke="currentColor" /><path d="M3 .500h5v5" fill="none" stroke="currentColor" /></svg></MiniButton>
                <MiniButton><X size={11} strokeWidth={1} /></MiniButton>
              </MiniWindowButtons>
            </ChromeTitleRow>
            <ChromeTabRow>
              <Tab $w={49}>Home</Tab>
              <Tab $w={47}>Insert</Tab>
              <Tab $w={46} $active>Draw</Tab>
              <Tab $w={44}>View</Tab>
              <Tab $w={40}>Help</Tab>
              <RibbonActions>
                <RibbonAction $w={26}><svg width="13" height="11" viewBox="0 0 13 11"><path d="M3 9.500a2.500 2.500 0 0 1 0-5 3.500 3.500 0 0 1 6.800-.5A2.500 2.500 0 0 1 10 9.500z" fill="none" stroke="currentColor" /><circle cx="9.500" cy="8.500" r="2.200" fill="#d8d8d8" /></svg></RibbonAction>
                <RibbonAction $w={26}><svg width="11" height="12" viewBox="0 0 11 12"><path d="M1 1h9v7l-3 3H2a1 1 0 0 1-1-1z" fill="none" stroke="currentColor" /></svg></RibbonAction>
                <RibbonAction $w={26.5}><Lightbulb size={12} strokeWidth={1} /></RibbonAction>
                <RibbonAction $w={26}><Bell size={12} strokeWidth={1} /></RibbonAction>
                <RibbonAction $w={50}><Share size={12} strokeWidth={1} />Share</RibbonAction>
                <RibbonAction $w={32}><Expand size={12} strokeWidth={1} /></RibbonAction>
                <RibbonAction $w={20}><MoreHorizontal size={12} strokeWidth={1.500} /></RibbonAction>
              </RibbonActions>
            </ChromeTabRow>
            <ChromeToolRow>
              <RibbonIcon $w={20}><Undo2 size={15} strokeWidth={1} color="#b5b5b5" /></RibbonIcon>
              <RibbonIcon $ml={9} $w={20}><Redo2 size={15} strokeWidth={1} color="#7a7a7a" /></RibbonIcon>
              <RibbonRule $ml={6} />
              <RibbonIcon $w={28}>
                <svg width="18" height="15" viewBox="0 0 18 15"><path d="M1 4l6 5-2.500.500L6 13l-2 1-1.500-3.500L1 12z" fill="none" stroke="#bbb" strokeWidth=".9" /><path d="M9 1h6M12 1v10M9 11h6" stroke="#bbb" strokeWidth=".9" fill="none" /></svg>
              </RibbonIcon>
              <RibbonIcon $w={26}>
                <svg width="16" height="16" viewBox="0 0 16 16"><circle cx="7" cy="7" r="6" fill="none" stroke="#888" strokeDasharray="2 2" /><path d="M11 10v6M8 13h6" stroke="#5fc07a" strokeWidth="1.100" /></svg>
              </RibbonIcon>
              <RibbonIcon $w={30}>
                <svg width="14" height="18" viewBox="0 0 14 18"><path d="M1 9h12" stroke="#b5b5b5" strokeWidth="1.500" /><path d="M7 1v5M5 3.500L7 1l2 2.500M7 12v5M5 14.500L7 17l2-2.500" stroke="#3a9ad6" strokeWidth="1" fill="none" /></svg>
              </RibbonIcon>
              <RibbonRule />
              {pens.map((p, i) => (
                <PenSlot key={i} $selected={p.sel}>
                  <Pen top={p.top} tip={p.tip} kind={p.kind} />
                  {p.sel && <PenChevron><ChevronDown size={9} strokeWidth={1.500} /></PenChevron>}
                </PenSlot>
              ))}
              <RibbonIcon $w={24}><Plus size={16} strokeWidth={1} color="#6f6f6f" /></RibbonIcon>
              <RibbonRule $ml={3} />
              <RibbonIcon $w={26}>
                <svg width="14" height="17" viewBox="0 0 14 17"><path d="M4 8V4a1.200 1.200 0 0 1 2.400 0v4l3 .7c1 .3 1.400 1 1.300 2l-.5 4.300H4.500L2 10.500c-.6-1 .7-2 1.500-1.200z" fill="none" stroke="#b5b5b5" strokeWidth=".9" /><path d="M8 4c2 1 4-.5 5-3" stroke="#e0496e" strokeWidth="1" fill="none" /></svg>
              </RibbonIcon>
              <RibbonIcon $ml={8} $w={16}>
                <svg width="15" height="15" viewBox="0 0 15 15"><rect x="1" y="1" width="8" height="8" fill="#2f7fd0" /><circle cx="9.500" cy="9.500" r="4.500" fill="#333" stroke="#ddd" /></svg>
              </RibbonIcon>
              <RibbonText $ml={5} $w={44}>Shapes</RibbonText>
              <RibbonIcon $w={16}>
                <svg width="15" height="15" viewBox="0 0 15 15"><path d="M1 1h1M5 1h1M1 5v1M1 3h6" stroke="#bbb" /><rect x="3" y="4" width="8" height="8" fill="none" stroke="#3a9ad6" /><rect x="7" y="8" width="7" height="6" fill="#333" stroke="#3a9ad6" /></svg>
              </RibbonIcon>
              <RibbonText $ml={5} $w={66}>Ink to Shape</RibbonText>
              <RibbonIcon $w={16}>
                <svg width="13" height="15" viewBox="0 0 13 15"><path d="M6 1C2 3 7 5 4 7S1 11 4 13" stroke="#666" fill="none" /><circle cx="9.500" cy="11" r="2.500" stroke="#666" fill="none" /></svg>
              </RibbonIcon>
              <RibbonText $dim $ml={4} $w={50}>Ink to text</RibbonText>
            </ChromeToolRow>
          </Chrome>

          <NoteBody>
            <NoteSide>
              <svg width="15" height="15" viewBox="0 0 15 15"><path d="M1 1h2.500v13H1zM4.500 1H7v13H4.500zM8.500 2l2.500-.8 3.500 12.300-2.500.7z" fill="none" stroke="currentColor" /></svg>
              <svg width="15" height="15" viewBox="0 0 15 15"><circle cx="9" cy="6" r="4.700" fill="none" stroke="currentColor" /><path d="M5.500 9.500L1 14" stroke="currentColor" /></svg>
              <Clock size={15} strokeWidth={1} />
            </NoteSide>
            <NoteCanvas>
              <InkLayer width="1075" height="512" viewBox="41 178 1075 512">
                <g fill="none" stroke={PINK} strokeWidth="1.700" strokeLinecap="round" strokeLinejoin="round">
                  <path d="M433 239C360 252 290 264 202 284" />
                  <path d="M226 270L201 284L222 298" />
                  <path d="M458 245C478 262 515 280 553 290" />
                  <path d="M548 275L566 287C560 292 548 297 535 299" />
                  <path d="M535 290C541 287 549 289 553 290" strokeWidth="2.400" />
                  <path d="M502 238C600 244 720 258 872 246" />
                  <path d="M852 230C862 235 870 240 874 246C870 254 860 261 852 265" />
                  <path d="M552 524C500 536 450 552 400 560" strokeWidth="2" />
                  <path d="M404 543L394 561L413 566" />
                  <path d="M541 530C610 540 700 548 758 546" strokeWidth="2" />
                  <path d="M745 526C755 530 768 538 769 545C766 552 758 560 750 565" />
                </g>
                <g fill="none" stroke="#5cb0e8" strokeWidth="1.600" strokeLinecap="round">
                  <path d="M1096 268C1103 271 1110 277 1115 283" />
                  <path d="M1113 352h3" />
                </g>
              </InkLayer>

              <Ink $x={430} $b={226} $s={46} $r={-10} $sx={1.08} $sy={1.3}>Integer</Ink>
              <Ink $x={118} $b={366} $s={58} $r={-8} $sx={1.22}>Int</Ink>
              <Ink $blue $x={90} $b={452} $s={76} $r={-2} $sx={1.3}>(</Ink>
              <Ink $blue $x={112} $b={446} $s={40} $r={-6}>-2</Ink>
              <Ink $blue $x={154} $b={421} $s={30} $r={-4}>B</Ink>
              <Ink $blue $x={199} $b={416} $s={110} $sx={.4} $r={6}>,</Ink>
              <Ink $blue $x={218} $b={412} $s={40} $r={-8}>2</Ink>
              <Ink $blue $x={240} $b={404} $s={42} $r={-6}>B</Ink>
              <Ink $blue $x={248} $b={412} $s={84} $sx={1.4}>)</Ink>

              <Ink $x={520} $b={355} $s={44} $r={-10} $sx={1.09} $sy={1.15}>Small int</Ink>
              <Ink $blue $x={478} $b={408} $s={60}>(</Ink>
              <Ink $blue $x={498} $b={405} $s={36} $r={-9}>-32</Ink>
              <Ink $blue $x={566} $b={394} $s={36} $r={-4}>k</Ink>
              <Ink $blue $x={615} $b={384} $s={110} $sx={.4}>,</Ink>
              <Ink $blue $x={647} $b={384} $s={34} $r={-9}>32</Ink>
              <Ink $blue $x={686} $b={372} $s={38} $r={-4}>k</Ink>
              <Ink $blue $x={706} $b={368} $s={56}>)</Ink>

              <Ink $x={855} $b={320} $s={46} $r={-9} $sx={1.08} $sy={1.2}>Big Int</Ink>
              <Ink $blue $x={878} $b={386} $s={46} $r={-2}>(</Ink>
              <Ink $blue $x={892} $b={388} $s={34} $r={-13} $sx={.85} $sy={1.15}>-9x10</Ink>
              <Ink $blue $x={945} $b={347} $s={28}>8</Ink>
              <Ink $blue $x={984} $b={370} $s={90} $sx={.35}>,</Ink>
              <Ink $blue $x={1020} $b={362} $s={44} $r={-12} $sx={.85} $sy={1.15}>9x10</Ink>
              <Ink $blue $x={1083} $b={304} $s={28}>8</Ink>

              <Ink $x={504} $b={514} $s={43} $r={-9} $sx={1.1} $sy={1.3}>String</Ink>
              <Ink $x={295} $b={625} $s={38} $r={-3} $sx={1.08} $sy={1.45}>Varchar</Ink>
              <Ink $x={752} $b={598} $s={45} $r={-6} $sx={1.06} $sy={1.1}>nvarchar</Ink>
            </NoteCanvas>
          </NoteBody>

          <RemoteBar>
            <WeatherBlob />
            <NamePill>Ragav Kumar V (Guest)<MicSlash s={15} c="#eee" /></NamePill>
            <HazeText>Haze</HazeText>
            <ZoomPill><Minus size={13} strokeWidth={1} color="#555" /><Plus size={15} strokeWidth={1} /></ZoomPill>
            <RemoteApps>
              <RemoteSlot $w={29}><Win11Logo /></RemoteSlot>
              <RemoteSearch>
                <Search size={12} strokeWidth={1.300} />
                <SearchWord>Search</SearchWord>
                <BookArt />
              </RemoteSearch>
              <RemoteSlot $w={32}><Stack /></RemoteSlot>
              <RemoteSlot $w={32}><Folder s={18} /></RemoteSlot>
              <RemoteSlot $w={32}><Monitor /></RemoteSlot>
              <RemoteSlot $w={32}><Firefox /></RemoteSlot>
              <RemoteSlot $w={30} $active><OneNoteLogo /></RemoteSlot>
              <RemoteSlot $w={46}><ProfileBlob /></RemoteSlot>
            </RemoteApps>
            <RemoteTray>
              <RemoteTrayIcon><ChevronUp size={13} strokeWidth={1.400} /></RemoteTrayIcon>
              <RemoteTrayIcon><svg width="13" height="13" viewBox="0 0 13 13"><path d="M1 6l5-4 5 4-5 5z" fill="#6fae3a" /></svg></RemoteTrayIcon>
              <RemoteTrayIcon><Dotty c="#3f7fd8" /></RemoteTrayIcon>
              <RemoteTrayIcon><svg width="12" height="13" viewBox="0 0 12 13"><circle cx="6" cy="3" r="1.600" fill="#e3c23a" /><circle cx="3" cy="9" r="1.600" fill="#d84a8a" /><circle cx="9" cy="9" r="1.600" fill="#3aa0d8" /></svg></RemoteTrayIcon>
              <RemoteTrayIcon><svg width="14" height="9" viewBox="0 0 14 9"><path d="M3.500 8.500a3 3 0 0 1 0-6A4 4 0 0 1 11 3.500a2.500 2.500 0 0 1 0 5z" fill="#e4e4e4" /></svg></RemoteTrayIcon>
              <RemoteTrayIcon><ChromeLogo s={12} /></RemoteTrayIcon>
              <RemoteTrayIcon><svg width="13" height="14" viewBox="0 0 13 14"><path d="M6.500 1l5.500 2v4c0 3-2.500 5-5.500 6C3.500 12 1 10 1 7V3z" fill="#2f8fd8" /><path d="M6.500 7l3 5h-6z" fill="#f0c030" /></svg></RemoteTrayIcon>
              <RemoteTrayIcon><svg width="11" height="14" viewBox="0 0 11 14"><rect x=".5" y=".5" width="10" height="13" rx="5" fill="#1f78d8" /><path d="M3 4l5 5-2.500 2.500V2.500L8 5 3 10" stroke="#fff" strokeWidth=".8" fill="none" /></svg></RemoteTrayIcon>
              <RemoteTrayIcon><Mic size={13} strokeWidth={1} color="#9fd0e8" /></RemoteTrayIcon>
              <RemoteTrayIcon $w={24}><svg width="13" height="14" viewBox="0 0 13 14"><path d="M2 12c1-3 3-5 5-7l3-3 1.500 1.500-3 3c-2 2-4 4-6.500 5.500zM6 12h6" stroke="#ddd" strokeWidth=".9" fill="none" /></svg></RemoteTrayIcon>
              <RemoteLang>ENG<br />IN</RemoteLang>
              <RemoteTrayIcon $w={18}><Wifi size={13} strokeWidth={1} /></RemoteTrayIcon>
              <RemoteTrayIcon $w={17}><VolumeX size={13} strokeWidth={1} /></RemoteTrayIcon>
              <RemoteTrayIcon $w={18}><svg width="14" height="13" viewBox="0 0 14 13"><rect x="3" y="3" width="8" height="8" rx="2" fill="#ddd" /><path d="M1 5c0-2 2-4 5-4" stroke="#ddd" fill="none" /></svg></RemoteTrayIcon>
              <RemoteClock>11:40<br />13-06-2024</RemoteClock>
              <RemoteTrayIcon $w={24}><Bell size={13} strokeWidth={1.300} fill="#ddd" /></RemoteTrayIcon>
              <RemoteTrayIcon $w={26}><Copilot /></RemoteTrayIcon>
            </RemoteTray>
          </RemoteBar>
        </SharedScreen>

        <Side>
          <PeopleGrid>
            {people.map((p) => (
              <Person key={p.i}>
                <Avatar $bg={p.bg} $fg={p.fg}>{p.i}</Avatar>
                <NameRow>{p.n}<MicSlash /></NameRow>
              </Person>
            ))}
            <Person>
              <MoreCircle><Dot /><Dot /><Dot /></MoreCircle>
              <NameRow>View all</NameRow>
            </Person>
          </PeopleGrid>
          <SelfTile>
            <Avatar $bg="#cfdcea" $fg="#12355e" $d={56} $fs={23}>TS</Avatar>
          </SelfTile>
        </Side>
      </Stage>

      <Taskbar>
        <StartSlot><WinLogo s={17} c="#fff" /></StartSlot>
        <SearchBox>
          <FlippedSearch size={17} strokeWidth={1.200} />
          <SearchLabel>Type here to search</SearchLabel>
          <BrandButton>
            <svg width="11" height="11" viewBox="0 0 11 11"><circle cx="5.500" cy="5.500" r="4.500" fill="none" stroke="#e8772e" /><circle cx="5.500" cy="5.500" r="2" fill="#e8772e" /></svg>
            proclink
          </BrandButton>
        </SearchBox>
        <TaskSlot>
          <svg width="18" height="18" viewBox="0 0 18 18"><path d="M1 1h11M1 17h11" stroke="#fff" strokeWidth="1.200" /><rect x="2" y="4.500" width="9" height="9" fill="none" stroke="#fff" strokeWidth="1.200" /><path d="M15 1h1.500v3H15zM15 7h1.500v4H15zM15 14h1.500v3H15z" fill="#fff" /></svg>
        </TaskSlot>
        <TaskSlot $open><Edge /></TaskSlot>
        <TaskSlot><Folder s={26} /></TaskSlot>
        <TaskSlot><Store /></TaskSlot>
        <TaskSlot><Mail /></TaskSlot>
        <TaskSlot $open><Outlook /></TaskSlot>
        <TaskSlot $open $active><Teams /></TaskSlot>
        <TaskSlot $open><VSCode /></TaskSlot>
        <TaskSlot $open><ChromeLogo /></TaskSlot>
        <TaskSlot $open><ToolApp /></TaskSlot>
        <Tray>
          <TrayIcon $w={28}><SPChart /></TrayIcon>
          <TrayText $ml={2} $w={44} $fs={14}>S&amp;P...</TrayText>
          <TrayIcon $ml={16} $w={23.5}><ChevronUp size={17} strokeWidth={1.200} /></TrayIcon>
          <TrayIcon $w={24}><svg width="14" height="18" viewBox="0 0 14 18"><rect x="4" y="0" width="6" height="11" rx="3" fill="#fff" /><path d="M1 7c0 4 2.500 6 6 6s6-2 6-6M7 13v3M3 17h8" stroke="#fff" strokeWidth="1.300" fill="none" /></svg></TrayIcon>
          <TrayIcon $w={24.5}><svg width="17" height="17" viewBox="0 0 17 17"><path d="M1 3l12-2v14H1z" fill="none" stroke="#fff" /><path d="M5 9l2-2 2 2-2 2z" fill="#fff" /><circle cx="13" cy="13" r="3.500" fill="#2c78c8" /></svg></TrayIcon>
          <TrayIcon $w={25}><svg width="17" height="11" viewBox="0 0 17 11"><rect x=".6" y=".6" width="14" height="9.800" fill="none" stroke="#fff" strokeWidth="1.200" /><rect x="2.500" y="2.500" width="6" height="6" fill="#fff" /><rect x="15.400" y="3.500" width="1.300" height="4" fill="#fff" /></svg></TrayIcon>
          <TrayIcon $w={23}><svg width="16" height="15" viewBox="0 0 16 15"><path d="M1 14C1 7 7 1 15 1M5 14c0-4 4-9 10-9M9 14c0-2 2-5 6-5" stroke="#fff" strokeWidth="1" fill="none" strokeDasharray="2 1" /></svg></TrayIcon>
          <TrayIcon $w={20}><VolumeX size={17} strokeWidth={1} /></TrayIcon>
          <TrayText $ml={4} $w={34}>ENG</TrayText>
          <Clock2>11:41<br />13-06-2024</Clock2>
          <Notify>
            <NotifyBubble width="18" height="17" viewBox="0 0 18 17"><path d="M1 1h16v12H9l-4 3v-3H1z" fill="#f4f4f4" /><path d="M4 4.500h10M4 7.500h10" stroke="#222" /></NotifyBubble>
            <NotifyBadge>9</NotifyBadge>
          </Notify>
        </Tray>
      </Taskbar>
    </Root>
  );
}
